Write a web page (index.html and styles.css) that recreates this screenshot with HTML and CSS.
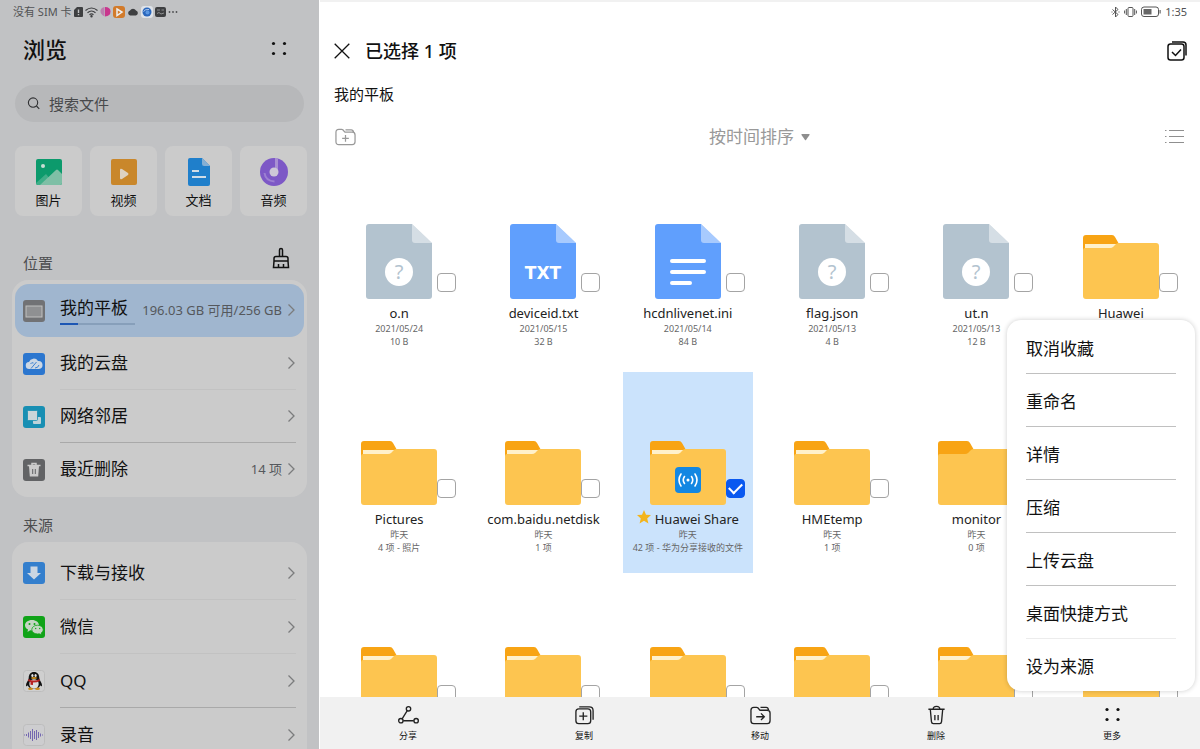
FILE: index.html
```html
<!DOCTYPE html>
<html lang="zh-CN">
<head>
<meta charset="utf-8">
<meta name="viewport" content="width=device-width, initial-scale=1">
<title>文件管理</title>
<link rel="stylesheet" href="styles.css">
</head>
<body>
<svg class="sprite" aria-hidden="true">
  <symbol id="folder" viewBox="0 0 76 64">
    <path fill="#f8a414" d="M0 20V3a3 3 0 0 1 3-3h26q2 0 3 2l4 7v11z"/>
    <path fill="#fff1cb" d="M2 9h33v6H2z"/>
    <path fill="#fdc550" d="M0 15q0-2 2-2h25q2 0 3-1l3-3q1-1 3-1h37a3 3 0 0 1 3 3v50a3 3 0 0 1-3 3H3a3 3 0 0 1-3-3z"/>
  </symbol>
  <symbol id="folder-empty" viewBox="0 0 76 64">
    <path fill="#f8a414" d="M0 20V3a3 3 0 0 1 3-3h26q2 0 3 2l4 7v11z"/>
    <path fill="#fdc550" d="M0 15q0-2 2-2h25q2 0 3-1l3-3q1-1 3-1h37a3 3 0 0 1 3 3v50a3 3 0 0 1-3 3H3a3 3 0 0 1-3-3z"/>
  </symbol>
  <symbol id="doc" viewBox="0 0 66 75">
    <path fill="currentColor" d="M3 0h43l20 19v53a3 3 0 0 1-3 3H3a3 3 0 0 1-3-3V3a3 3 0 0 1 3-3z"/>
    <path fill="#fff" fill-opacity=".45" d="M46 0l20 19H49a3 3 0 0 1-3-3z"/>
  </symbol>
  <symbol id="chevron" viewBox="0 0 8 14">
    <path fill="none" stroke="#7b7c7d" stroke-width="1.3" d="M.5 1.500L6 7 .5 12.500"/>
  </symbol>
  <symbol id="dots" viewBox="0 0 20 20">
    <g fill="currentColor"><circle cx="4.500" cy="4.500" r="1.600"/><circle cx="15.500" cy="4.500" r="1.600"/><circle cx="4.500" cy="14.500" r="1.600"/><circle cx="15.500" cy="14.500" r="1.600"/></g>
  </symbol>
</svg>

<aside class="sidebar">
  <div class="status">
    <span class="carrier">没有 SIM 卡</span>
    <svg width="9" height="12" viewBox="0 0 9 12"><path fill="#3e3f41" d="M3 1h5q1 0 1 1v8q0 1-1 1H1q-1 0-1-1V4z"/><path stroke="#c1c2c4" stroke-width="1.400" d="M4.500 3.500v3.500M4.500 8v1.300"/></svg>
    <svg width="13" height="12" viewBox="0 0 13 12" fill="none" stroke="#3e3f41" stroke-width="1.200"><path d="M.5 4.500q6-5 12 0M2.500 6.700q4-3.400 8 0M4.500 8.700q2-1.600 4 0"/><circle cx="6.500" cy="10.300" r=".6" fill="#3e3f41"/></svg>
    <svg width="11" height="12" viewBox="0 0 11 12"><path fill="#bb7fae" d="M4.500 1v9.500Q0 8 .5 4.500 1 1.500 4.500 1z"/><path fill="#c9368d" d="M5 1q5.500 0 5.500 4.500T5 10.500z"/></svg>
    <svg width="12" height="12" viewBox="0 0 12 12"><rect width="12" height="12" rx="3" fill="#d27a2a"/><path fill="none" stroke="#eee" stroke-width="1.500" d="M4 3l5 3-5 3.500z"/></svg>
    <svg width="12" height="12" viewBox="0 0 12 12"><path fill="#3e3f41" d="M3 9.500a2.600 2.600 0 0 1 0-5 3.500 3.500 0 0 1 6 0 2.600 2.600 0 0 1 0 5z"/></svg>
    <svg width="12" height="12" viewBox="0 0 12 12"><rect width="12" height="12" rx="3" fill="#dfe3e9"/><circle cx="6" cy="6" r="4.500" fill="#2a67bd"/><circle cx="6.500" cy="6.500" r="2" fill="#5b97e2"/><path fill="none" stroke="#cfe0f5" stroke-width=".8" d="M2.500 5.500Q4 3 8 3.500"/></svg>
    <svg width="11" height="12" viewBox="0 0 11 12"><rect y="1" width="11" height="10" rx="2" fill="#3e3f41"/><path fill="none" stroke="#a3a4a6" stroke-width=".8" d="M2 4h3M6.500 4h2.500M2 7.500l2-1 2 1.500 3-1"/></svg>
    <svg width="10" height="12" viewBox="0 0 10 12" fill="#4e4f51"><circle cx="1.500" cy="6" r=".9"/><circle cx="5" cy="6" r=".9"/><circle cx="8.500" cy="6" r=".9"/></svg>
  </div>
  <header class="side-head">
    <h1>浏览</h1>
    <button class="icon-btn" aria-label="更多选项"><svg width="20" height="20"><use href="#dots"/></svg></button>
  </header>
  <label class="search">
    <svg width="13" height="13" viewBox="0 0 14 14" fill="none" stroke="#303133" stroke-width="1.200"><circle cx="6.500" cy="6" r="5"/><path d="M10.200 9.700l3 3"/></svg>
    <input type="search" placeholder="搜索文件" aria-label="搜索文件">
  </label>
  <nav class="kinds" aria-label="分类">
    <button class="kind"><svg width="28" height="30" viewBox="0 0 28 30"><clipPath id="pic"><rect x="1" y="2" width="26" height="26" rx="2"/></clipPath><g clip-path="url(#pic)"><path fill="#0c9a6c" d="M0 0h28v30H0z"/><path fill="#3fae88" d="M1 26l10-9 9 11H1z"/><path fill="#7fbfa6" d="M5 28l16-15q1-1 2 0l5 5v10z"/><circle cx="8" cy="9" r="2" fill="#c9ddd5"/></g></svg>图片</button>
    <button class="kind"><svg width="28" height="30" viewBox="0 0 28 30"><rect x="1" y="2" width="26" height="26" rx="2" fill="#c9872b"/><path fill="#ddd2c3" d="M10 13q0-2 2-1l6 4q1 1 0 2l-6 4q-2 1-2-1z"/></svg>视频</button>
    <button class="kind"><svg width="28" height="30" viewBox="0 0 28 30"><path fill="#1f7fcb" d="M5 1h12l8 8v18q0 2-2 2H5q-2 0-2-2V3q0-2 2-2z"/><path fill="#85afd4" d="M17 1l8 8h-6q-2 0-2-2z"/><path stroke="#d0dce6" stroke-width="1.800" d="M7 14h7M7 20h14"/></svg>文档</button>
    <button class="kind"><svg width="28" height="30" viewBox="0 0 28 30"><circle cx="14" cy="15" r="14" fill="#7d58c6"/><path fill="#a88fd3" d="M15 1h3v14h-3z"/><path fill="none" stroke="#9d80d2" stroke-width="2" d="M4.500 16q1 8 10 8.500"/><circle cx="14" cy="15" r="4.500" fill="#cdc7d7"/></svg>音频</button>
  </nav>

  <div class="section-head">
    <h2>位置</h2>
    <button class="icon-btn" aria-label="清理"><svg width="20" height="24" viewBox="0 0 20 24" fill="none" stroke="#111" stroke-width="1.500"><path d="M8.500 9.500V3a1.500 1.500 0 0 1 3 0v6.500M3 14v-2.500q0-2 2-2h10q2 0 2 2V14zM3 14l-.5 6.500h15L17 14M7.500 20.500V17M12.500 20.500V17"/></svg></button>
  </div>
  <nav class="card places" aria-label="位置">
    <a class="row active" href="#" aria-current="page">
      <svg class="app" viewBox="0 0 22 22"><rect width="22" height="22" rx="3" fill="#717275"/><rect x="3" y="6" width="16" height="11" fill="#8f9092" stroke="#c0c0c0"/></svg>
      <span class="body"><span class="name storage">我的平板<progress value="24" max="100" aria-label="已用空间"></progress></span><span class="note">196.03 GB 可用/256 GB</span><svg class="go"><use href="#chevron"/></svg></span>
    </a>
    <a class="row" href="#">
      <svg class="app" viewBox="0 0 22 22"><rect width="22" height="22" rx="3" fill="#2b76cf"/><path fill="#ccd7e4" d="M6.500 16a3.500 3.500 0 0 1-.5-7A5 5 0 0 1 15 8a4 4 0 0 1 1 8z"/><path fill="none" stroke="#2b76cf" stroke-width=".9" d="M8 15.500l5.500-6.500M7.500 11q1-2 3-1M12 15q3 0 4-3"/></svg>
      <span class="body"><span class="name">我的云盘</span><svg class="go"><use href="#chevron"/></svg></span>
    </a>
    <a class="row" href="#">
      <svg class="app" viewBox="0 0 22 22"><rect width="22" height="22" rx="3" fill="#188fb3"/><rect x="10" y="11" width="8" height="7" rx="1" fill="#bcd2d9"/><rect x="4.500" y="4.500" width="10" height="10" rx="1" fill="#cbd5d8" stroke="#188fb3" stroke-width=".8"/></svg>
      <span class="body"><span class="name">网络邻居</span><svg class="go"><use href="#chevron"/></svg></span>
    </a>
    <a class="row" href="#">
      <svg class="app" viewBox="0 0 22 22"><rect width="22" height="22" rx="3" fill="#626365"/><path fill="none" stroke="#cbcbcb" stroke-width="1.500" d="M4.500 6.500h13M9 6V4.500h4V6"/><path fill="#cbcbcb" d="M6 7h10l-.8 10.500H6.800z"/><path stroke="#626365" d="M9.700 10v5M12.300 10v5"/></svg>
      <span class="body"><span class="name">最近删除</span><span class="note">14 项</span><svg class="go"><use href="#chevron"/></svg></span>
    </a>
  </nav>

  <div class="section-head sources-head"><h2>来源</h2></div>
  <nav class="card sources" aria-label="来源">
    <a class="row" href="#">
      <svg class="app" viewBox="0 0 22 22"><rect width="22" height="22" rx="3" fill="#347fcd"/><path fill="#cbd6e2" d="M7.500 4.500h7V11H18l-7 6.500L4 11h3.500z"/></svg>
      <span class="body"><span class="name">下载与接收</span><svg class="go"><use href="#chevron"/></svg></span>
    </a>
    <a class="row" href="#">
      <svg class="app" viewBox="0 0 22 22"><rect width="22" height="22" rx="3" fill="#10a318"/><path fill="#c5d5c4" d="M9 4c4 0 7 2.300 7 5.200S13 14.500 9 14.500l-1.800-.2L4.500 16l.5-2.500C3 12.500 2 11 2 9.200 2 6.300 5 4 9 4z"/><path fill="#c5d5c4" stroke="#10a318" stroke-width=".8" d="M14.500 9.200c3.300 0 5.700 2 5.700 4.400 0 1.500-.8 2.700-2 3.500l.3 1.900-2.200-1.200-1.800.2c-3.300 0-5.700-2-5.700-4.400s2.400-4.400 5.700-4.400z"/><g fill="#10a318"><circle cx="6.500" cy="8" r="1"/><circle cx="11.500" cy="8" r="1"/><circle cx="12.700" cy="12.500" r=".7"/><circle cx="16.700" cy="12.500" r=".7"/></g></svg>
      <span class="body"><span class="name">微信</span><svg class="go"><use href="#chevron"/></svg></span>
    </a>
    <a class="row" href="#">
      <svg class="app" viewBox="0 0 22 22"><rect x=".5" y=".5" width="21" height="21" rx="3" fill="#cfcfcf" stroke="#bdbdbd"/><path fill="#111" d="M11 2c3.500 0 5.300 2.600 5.300 6 0 2 2.700 5 2.700 7s-1 1.500-1.700.3Q16 19 11 19t-6.300-3.700C4 16.500 3 17 3 15s2.700-5 2.700-7c0-3.400 1.800-6 5.300-6z"/><ellipse cx="11" cy="14" rx="4.700" ry="4.800" fill="#ddd"/><g fill="#e5e5e5"><ellipse cx="9.400" cy="5.500" rx="1.100" ry="1.500"/><ellipse cx="12.600" cy="5.500" rx="1.100" ry="1.500"/></g><ellipse cx="11" cy="8" rx="3" ry="1" fill="#c98a1a"/><path fill="#b82222" d="M5.500 9q5.500 3 11 0l.5 2q-3 1.500-7 1.500V15l-2.500-.3V12L5 11z"/><path fill="#c98a1a" d="M5 18.500q3-2 5 0 0 1.500-2.500 1.500T5 18.500zM12 18.500q3-2 5 0 0 1.500-2.500 1.500T12 18.500z"/></svg>
      <span class="body"><span class="name">QQ</span><svg class="go"><use href="#chevron"/></svg></span>
    </a>
    <a class="row" href="#">
      <svg class="app" viewBox="0 0 22 22"><rect x=".5" y=".5" width="21" height="21" rx="3" fill="#cdcdcf" stroke="#bdbdbd"/><path fill="none" stroke="#7468b0" d="M1.500 10.500v1M3.500 10v2M5.500 8.500v5M7.500 7v8M9.500 5v12M11.500 7v8M13.500 6v10M15.500 8v6M17.500 9.500v3M19.500 10.500v1"/></svg>
      <span class="body"><span class="name">录音</span><svg class="go"><use href="#chevron"/></svg></span>
    </a>
  </nav>
</aside>

<main class="main">
  <div class="status status-right">
    <svg width="9" height="12" viewBox="0 0 9 12" fill="none" stroke="#555"><path d="M1.500 3.500l5.500 5L4.500 11V1L7 3.500l-5.500 5M.5 6h1M7.500 6h1"/></svg>
    <svg width="13" height="12" viewBox="0 0 13 12" fill="none" stroke="#555"><rect x="4" y="1.500" width="5" height="9" rx="1"/><path d="M2.300 3v6M.6 4.500v3M10.700 3v6M12.400 4.500v3"/></svg>
    <svg width="20" height="12" viewBox="0 0 20 12"><rect x=".5" y="1" width="17" height="9.500" rx="2.500" fill="none" stroke="#555"/><path fill="#666" d="M2.500 3h8v5.500h-8zM18.500 4h1.200v3.500h-1.200z"/></svg>
    <time>1:35</time>
  </div>
  <header class="main-head">
    <button class="icon-btn" aria-label="取消选择"><svg width="16" height="16" viewBox="0 0 16 16" fill="none" stroke="#111" stroke-width="1.300"><path d="M.7.7l14.600 14.600M15.300.7L.7 15.300"/></svg></button>
    <h2>已选择 1 项</h2>
    <button class="icon-btn" aria-label="全选"><svg width="20" height="20" viewBox="0 0 20 20" fill="none" stroke="#111" stroke-width="1.500"><rect x="1" y="3" width="16" height="16" rx="2.500"/><path d="M5 11l3.500 3.500L14 8.500M5 1h11q3 0 3 3v10.500"/></svg></button>
  </header>
  <p class="crumb">我的平板</p>
  <div class="toolbar">
    <button class="icon-btn" aria-label="新建文件夹"><svg width="21" height="18" viewBox="0 0 22 18" fill="none" stroke="#999" stroke-width="1.300"><path d="M1 14V4q0-3 3-3h3q1.500 0 2.500 2l1 1H18q3 0 3 3v7q0 3-3 3H4q-3 0-3-3zM11 1.500h6q2 0 2.500 2.500M7.500 10.500h7M11 7v7"/></svg></button>
    <label class="sort"><select aria-label="排序方式"><option>按时间排序</option></select><svg width="9" height="7" viewBox="0 0 9 7"><path fill="#8e8e8e" d="M1 0h7q1 0 .5 1L5 6q-.5.600-1 0L.5 1Q0 0 1 0z"/></svg></label>
    <button class="icon-btn list-btn" aria-label="列表视图"><svg width="19" height="14" viewBox="0 0 19 14" fill="none" stroke="#8f8f8f"><path d="M0 .5h1.500M4 .5h15M0 6.500h1.500M4 6.500h15M0 12.500h1.500M4 12.500h15"/></svg></button>
  </div>

  <section class="files" aria-label="文件">
    <label class="tile"><span class="pic"><svg class="doc grey" viewBox="0 0 66 75"><use href="#doc"/><circle cx="33" cy="48" r="14" fill="#fff"/><text x="33" y="55">?</text></svg><input type="checkbox"></span><span class="fname">o.n</span><span class="meta">2021/05/24</span><span class="meta">10 B</span></label>
    <label class="tile"><span class="pic"><svg class="doc blue" viewBox="0 0 66 75"><use href="#doc"/><text class="ext" x="33" y="55">TXT</text></svg><input type="checkbox"></span><span class="fname">deviceid.txt</span><span class="meta">2021/05/15</span><span class="meta">32 B</span></label>
    <label class="tile"><span class="pic"><svg class="doc blue" viewBox="0 0 66 75"><use href="#doc"/><path stroke="#fff" stroke-width="4" stroke-linecap="round" d="M17 37h32M17 48h32M17 59h18"/></svg><input type="checkbox"></span><span class="fname">hcdnlivenet.ini</span><span class="meta">2021/05/14</span><span class="meta">84 B</span></label>
    <label class="tile"><span class="pic"><svg class="doc grey" viewBox="0 0 66 75"><use href="#doc"/><circle cx="33" cy="48" r="14" fill="#fff"/><text x="33" y="55">?</text></svg><input type="checkbox"></span><span class="fname">flag.json</span><span class="meta">2021/05/13</span><span class="meta">4 B</span></label>
    <label class="tile"><span class="pic"><svg class="doc grey" viewBox="0 0 66 75"><use href="#doc"/><circle cx="33" cy="48" r="14" fill="#fff"/><text x="33" y="55">?</text></svg><input type="checkbox"></span><span class="fname">ut.n</span><span class="meta">2021/05/13</span><span class="meta">12 B</span></label>
    <label class="tile"><span class="pic"><svg class="folder"><use href="#folder"/></svg><input type="checkbox"></span><span class="fname">Huawei</span></label>

    <label class="tile"><span class="pic"><svg class="folder"><use href="#folder"/></svg><input type="checkbox"></span><span class="fname">Pictures</span><span class="meta">昨天</span><span class="meta">4 项 - 照片</span></label>
    <label class="tile"><span class="pic"><svg class="folder"><use href="#folder"/></svg><input type="checkbox"></span><span class="fname">com.baidu.netdisk</span><span class="meta">昨天</span><span class="meta">1 项</span></label>
    <label class="tile selected"><span class="pic"><svg class="folder" viewBox="0 0 76 64"><use href="#folder"/><rect x="25" y="26" width="26" height="26" rx="4" fill="#1387e2"/><g fill="none" stroke="#fff" stroke-width="1.600" stroke-linecap="round"><path d="M34.500 35.500q-2.500 3.500 0 7M31 33q-4 6 0 12M41.500 35.500q2.500 3.500 0 7M45 33q4 6 0 12"/></g><circle cx="38" cy="39" r="1.500" fill="#fff"/></svg><input type="checkbox" checked></span><span class="fname"><svg class="star" viewBox="0 0 14 14"><path fill="#f3b41b" d="M7 0l2 4.700 5 .4-3.800 3.300L11.400 13.400 7 10.700 2.600 13.400l1.200-5L0 5.100l5-.4z"/></svg>Huawei Share</span><span class="meta">昨天</span><span class="meta">42 项 - 华为分享接收的文件</span></label>
    <label class="tile"><span class="pic"><svg class="folder"><use href="#folder"/></svg><input type="checkbox"></span><span class="fname">HMEtemp</span><span class="meta">昨天</span><span class="meta">1 项</span></label>
    <label class="tile"><span class="pic"><svg class="folder"><use href="#folder-empty"/></svg><input type="checkbox"></span><span class="fname">monitor</span><span class="meta">昨天</span><span class="meta">0 项</span></label>
    <span class="tile"></span>

    <label class="tile"><span class="pic"><svg class="folder"><use href="#folder"/></svg><input type="checkbox" aria-label="文件夹"></span></label>
    <label class="tile"><span class="pic"><svg class="folder"><use href="#folder"/></svg><input type="checkbox" aria-label="文件夹"></span></label>
    <label class="tile"><span class="pic"><svg class="folder"><use href="#folder"/></svg><input type="checkbox" aria-label="文件夹"></span></label>
    <label class="tile"><span class="pic"><svg class="folder"><use href="#folder"/></svg><input type="checkbox" aria-label="文件夹"></span></label>
    <label class="tile"><span class="pic"><svg class="folder"><use href="#folder"/></svg><input type="checkbox" aria-label="文件夹"></span></label>
    <label class="tile"><span class="pic"><svg class="folder"><use href="#folder"/></svg><input type="checkbox" aria-label="文件夹"></span></label>
  </section>

  <footer class="actions">
    <button><svg viewBox="0 0 22 20"><circle cx="11" cy="3.500" r="2.300"/><circle cx="3" cy="16" r="2.300"/><circle cx="19" cy="16" r="2.300"/><path d="M9.700 5.500L4.300 14M5.500 16h11"/></svg>分享</button>
    <button><svg viewBox="0 0 22 20"><rect x="2" y="3.500" width="15.500" height="15.500" rx="3"/><path d="M5.500 11.200h8.500M9.700 7v8.500M5.500 1.500H16q4 0 4 4v9.500"/></svg>复制</button>
    <button><svg viewBox="0 0 22 20"><path d="M1 16V5q0-3 3-3h3q1.500 0 2.500 2l1 1H18q3 0 3 3v8q0 3-3 3H4q-3 0-3-3zM11 2h6q2 0 2.500 3M6.500 11.800h8.500M11.500 8.300l3.500 3.500-3.500 3.500"/></svg>移动</button>
    <button><svg viewBox="0 0 22 20"><path d="M2.500 4h17M7.500 4q0-3 3.500-3t3.500 3M4.500 4l1.200 13q.2 2 2 2h6.600q1.800 0 2-2L17.500 4M9.300 10v5.500M12.700 10v5.500"/></svg>删除</button>
    <button aria-expanded="true"><svg viewBox="0 0 20 20"><use href="#dots"/></svg>更多</button>
  </footer>

  <div class="menu" role="menu">
    <button role="menuitem">取消收藏</button>
    <button role="menuitem">重命名</button>
    <button role="menuitem">详情</button>
    <button role="menuitem">压缩</button>
    <button role="menuitem">上传云盘</button>
    <button role="menuitem">桌面快捷方式</button>
    <button role="menuitem">设为来源</button>
  </div>
</main>
</body>
</html>
```
FILE: styles.css
```css
* { box-sizing: border-box; }

body {
  margin: 0;
  height: 100vh;
  display: flex;
  overflow: hidden;
  background: #fff;
  color: #111;
  font-family: "Noto Sans", "Noto Sans CJK SC", sans-serif;
}

h1, h2, p { margin: 0; }
button { border: 0; padding: 0; background: none; color: inherit; font: inherit; cursor: pointer; }
a { color: inherit; text-decoration: none; }
svg { display: block; flex: none; }
.sprite { position: absolute; width: 0; height: 0; }
.icon-btn { display: flex; align-items: center; justify-content: center; }

/* Sidebar */
.sidebar {
  flex: 0 0 319px;
  overflow: hidden;
  background: #c1c2c4;
}
.status {
  display: flex;
  align-items: center;
  gap: 2px;
  height: 22px;
  padding: 2px 13px 0;
  font-size: 11px;
  line-height: 16px;
  color: #515254;
}
.carrier { margin-right: 1px; }
.side-head {
  display: flex;
  align-items: center;
  justify-content: space-between;
  height: 54px;
  padding: 0 30px 0 23px;
}
.side-head h1 { font-size: 22px; line-height: 32px; font-weight: 500; }
.search {
  display: flex;
  align-items: center;
  gap: 9px;
  height: 37px;
  margin: 9px 15px 24px;
  padding: 0 12px;
  border-radius: 19px;
  background: #b7b8ba;
}
.search input {
  flex: 1;
  min-width: 0;
  padding: 0;
  border: 0;
  outline: 0;
  background: none;
  font: inherit;
  font-size: 15px;
  line-height: 22px;
}
.search input::placeholder { color: #48494b; opacity: 1; }
.kinds {
  display: grid;
  grid-template-columns: repeat(4, 1fr);
  gap: 8px;
  padding: 0 12px 0 15px;
}
.kind {
  display: flex;
  flex-direction: column;
  align-items: center;
  gap: 4px;
  height: 70px;
  padding-top: 11px;
  border-radius: 8px;
  background: #cbcbcb;
  font-size: 13px;
  line-height: 18px;
}
.section-head {
  display: flex;
  align-items: center;
  justify-content: space-between;
  height: 64px;
  padding: 22px 28px 0 23px;
}
.section-head h2 { font-size: 15px; line-height: 22px; font-weight: 400; color: #4c4d4f; padding-top: 8px; }
.sources-head { height: 45px; padding-top: 3px; }
.card { margin: 0 12px; padding: 4px 3px 1px; border-radius: 16px; background: #cbcbcb; }
.row { display: flex; align-items: center; gap: 15px; height: 53px; padding-left: 8px; }
.sources .row { height: 54px; }
.app { width: 22px; height: 22px; }
.body {
  flex: 1;
  align-self: stretch;
  display: flex;
  align-items: center;
  gap: 6px;
  margin-right: 8px;
  border-bottom: 1px solid #c2c2c2;
}
.row:nth-child(3) .body { border-color: #a9a9a9; }
.row:last-child .body, .active .body { border-color: transparent; }
.row.active { border-radius: 14px; background: #a0b6cf; }
.name { flex: 1; font-size: 17px; line-height: 24px; white-space: nowrap; }
.storage { flex: none; width: 75px; }
.storage progress {
  display: block;
  width: 100%;
  height: 2px;
  margin-top: 3px;
  border: 0;
  appearance: none;
  background: #879fba;
}
.storage progress::-webkit-progress-bar { background: #879fba; }
.storage progress::-webkit-progress-value { background: #1d57b4; }
.note { flex: 1; text-align: right; font-size: 13px; line-height: 18px; color: #55585c; white-space: nowrap; }
.name:not(.storage) + .note { flex: none; }
.go { width: 8px; height: 14px; }

/* Main pane */
.main {
  position: relative;
  flex: 1;
  min-width: 0;
  display: flex;
  flex-direction: column;
  border-top: 2px solid #f1f1f1;
  margin-left: 1px;
}
.status-right { height: 20px; padding-top: 0; gap: 4px; justify-content: flex-end; }
.main-head {
  display: flex;
  align-items: center;
  gap: 15px;
  height: 58px;
  padding: 0 13px 0 14px;
}
.main-head h2 { flex: 1; font-size: 18px; line-height: 26px; font-weight: 500; }
.crumb { padding: 3px 14px; font-size: 15px; line-height: 22px; }
.toolbar {
  display: grid;
  grid-template-columns: 1fr auto 1fr;
  align-items: center;
  justify-items: start;
  height: 58px;
  padding: 0 16px 0 15px;
}
.list-btn { justify-self: end; }
.sort { display: flex; align-items: center; gap: 7px; }
.sort select {
  appearance: none;
  border: 0;
  padding: 0;
  background: none;
  font: inherit;
  font-size: 17px;
  line-height: 24px;
  color: #999;
}

.files {
  flex: 1;
  min-height: 0;
  overflow: hidden;
  display: grid;
  grid-template-columns: repeat(6, 1fr);
  grid-auto-rows: 201px;
  row-gap: 5px;
  justify-items: center;
  padding: 0 7px;
}
.tile { display: flex; flex-direction: column; width: 130px; text-align: center; }
.selected { background: #cbe3fc; }
.pic {
  display: grid;
  grid-template-columns: 1fr 76px 1fr;
  align-items: end;
  height: 133px;
  margin-bottom: 5px;
}
.pic svg { grid-column: 2; justify-self: center; }
.folder { width: 76px; height: 64px; }
.doc { width: 66px; height: 75px; }
.doc text { font-size: 20px; text-anchor: middle; fill: currentColor; }
.doc .ext { font-family: "DejaVu Sans", sans-serif; font-size: 17px; font-weight: 700; fill: #fff; }
.grey { color: #b3c3cf; }
.blue { color: #609ffd; }
.pic input {
  appearance: none;
  width: 19px;
  height: 19px;
  margin: 0 0 7px;
  border: 1px solid #a4a4a4;
  border-radius: 4px;
  background: #fff;
}
.pic input:checked {
  display: grid;
  place-items: center;
  border-color: #0a59f0;
  background: #0a59f0;
}
.pic input:checked::before {
  content: "";
  width: 11px;
  height: 6px;
  margin-bottom: 3px;
  border: solid #fff;
  border-width: 0 0 2px 2px;
  transform: rotate(-45deg);
}
.fname {
  display: flex;
  justify-content: center;
  gap: 4px;
  font-size: 13px;
  line-height: 18px;
  white-space: nowrap;
  color: #222;
}
.star { width: 14px; height: 14px; }
.meta { font-size: 9px; line-height: 13px; color: #666; white-space: nowrap; }

.actions {
  display: grid;
  grid-template-columns: repeat(5, 1fr);
  height: 52px;
  background: #f1f1f1;
}
.actions button {
  display: flex;
  flex-direction: column;
  align-items: center;
  gap: 4px;
  padding-top: 8px;
  font-size: 9px;
  line-height: 13px;
}
.actions svg { width: 21px; height: 20px; fill: none; stroke: #222; stroke-width: 1.4; }
.actions svg use { stroke: none; }

.menu {
  position: absolute;
  right: 5px;
  bottom: 58px;
  width: 188px;
  padding: 1px 19px 0;
  border-radius: 14px;
  background: #fff;
  box-shadow: 0 0 5px rgba(0, 0, 0, .2);
}
.menu button {
  display: block;
  width: 100%;
  height: 53px;
  padding-top: 3px;
  border-bottom: 1px solid #c0c0c0;
  text-align: left;
  font-size: 17px;
  line-height: 24px;
}
.menu button:nth-child(6) { border-color: #ececec; }
.menu button:last-child { height: 52px; border-bottom: 0; }
```
